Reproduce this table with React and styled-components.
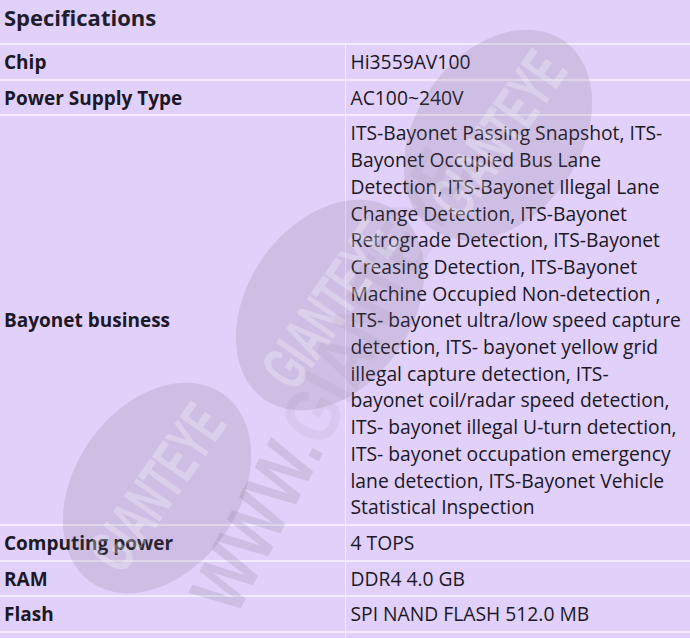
import React from "react";
import styled, { createGlobalStyle } from "styled-components";

const GlobalStyle = createGlobalStyle`
  html, body {
    margin: 0;
    padding: 0;
    background: #e0d0fa;
  }
  body {
    font-family: "Open Sans", "Liberation Sans", sans-serif;
    color: #1c1826;
  }
`;

const Page = styled.div`
  position: relative;
  width: 690px;
  height: 638px;
  overflow: hidden;
  background: #e0d0fa;
`;

const Title = styled.h3`
  margin: 0;
  height: 45px;
  padding: 0 4px;
  font-size: 22px;
  font-weight: 700;
  line-height: 34px;
  color: #221d2c;
  border-bottom: 2px solid #f3ecff;
  box-sizing: border-box;
`;

const Table = styled.table`
  width: 100%;
  border-collapse: collapse;
  table-layout: fixed;
`;

const Row = styled.tr`
  border-bottom: 2px solid #f3ecff;
`;

const Label = styled.th`
  box-sizing: border-box;
  width: 50%;
  text-align: left;
  vertical-align: middle;
  font-weight: 700;
  font-size: 19px;
  line-height: 26.7px;
  padding: 4px 4px 3px;
  border-right: 1px solid #f3ecff;
`;

const Value = styled.td`
  box-sizing: border-box;
  font-size: 19.3px;
  line-height: 26.7px;
  padding: 4px 4px 3px 5px;
  vertical-align: middle;
`;

const Marks = styled.div`
  position: absolute;
  inset: 0;
  pointer-events: none;
`;

const Oval = styled.div`
  position: absolute;
  left: ${(p) => p.$x - 82}px;
  top: ${(p) => p.$y - 115}px;
  width: 164px;
  height: 230px;
  border-radius: 50%;
  background: rgba(110, 100, 120, 0.16);
  transform: rotate(35deg);
  display: flex;
  align-items: center;
  justify-content: center;
`;

const OvalText = styled.span`
  transform: rotate(-90deg) scaleX(0.58);
  font-family: "Liberation Sans", sans-serif;
  font-weight: 700;
  font-size: 64px;
  letter-spacing: -1px;
  color: rgba(255, 255, 255, 0.28);
  white-space: nowrap;
`;

const Url = styled.div`
  position: absolute;
  left: 212px;
  top: 560px;
  transform-origin: left center;
  transform: rotate(-62deg) scaleX(0.8);
  font-family: "Liberation Sans", sans-serif;
  font-weight: 700;
  font-size: 78px;
  color: rgba(110, 100, 120, 0.17);
  white-space: nowrap;
`;

const Faint = styled.span`
  color: rgba(110, 100, 120, 0.07);
`;

const specs = [
  ["Chip", "Hi3559AV100"],
  ["Power Supply Type", "AC100~240V"],
  [
    "Bayonet business",
    "ITS-Bayonet Passing Snapshot, ITS-Bayonet Occupied Bus Lane Detection, ITS-Bayonet Illegal Lane Change Detection, ITS-Bayonet Retrograde Detection, ITS-Bayonet Creasing Detection, ITS-Bayonet Machine Occupied Non-detection , ITS- bayonet ultra/low speed capture detection, ITS- bayonet yellow grid illegal capture detection, ITS- bayonet coil/radar speed detection, ITS- bayonet illegal U-turn detection, ITS- bayonet occupation emergency lane detection, ITS-Bayonet Vehicle Statistical Inspection",
  ],
  ["Computing power", "4 TOPS"],
  ["RAM", "DDR4 4.0 GB"],
  ["Flash", "SPI NAND FLASH 512.0 MB"],
  ["", ""],
];

export default function App() {
  return (
    <Page>
      <GlobalStyle />
      <Title>Specifications</Title>
      <Table>
        <tbody>
          {specs.map(([k, v], i) => (
            <Row key={i}>
              <Label>{k}</Label>
              <Value>{v}</Value>
            </Row>
          ))}
        </tbody>
      </Table>
      <Marks>
        <Oval $x={498} $y={135}>
          <OvalText>GIANTEYE</OvalText>
        </Oval>
        <Oval $x={330} $y={305}>
          <OvalText>GIANTEYE</OvalText>
        </Oval>
        <Oval $x={157} $y={488}>
          <OvalText>GIANTEYE</OvalText>
        </Oval>
        <Url>
          WWW.<Faint>GIANTEYE</Faint>
        </Url>
      </Marks>
    </Page>
  );
}
